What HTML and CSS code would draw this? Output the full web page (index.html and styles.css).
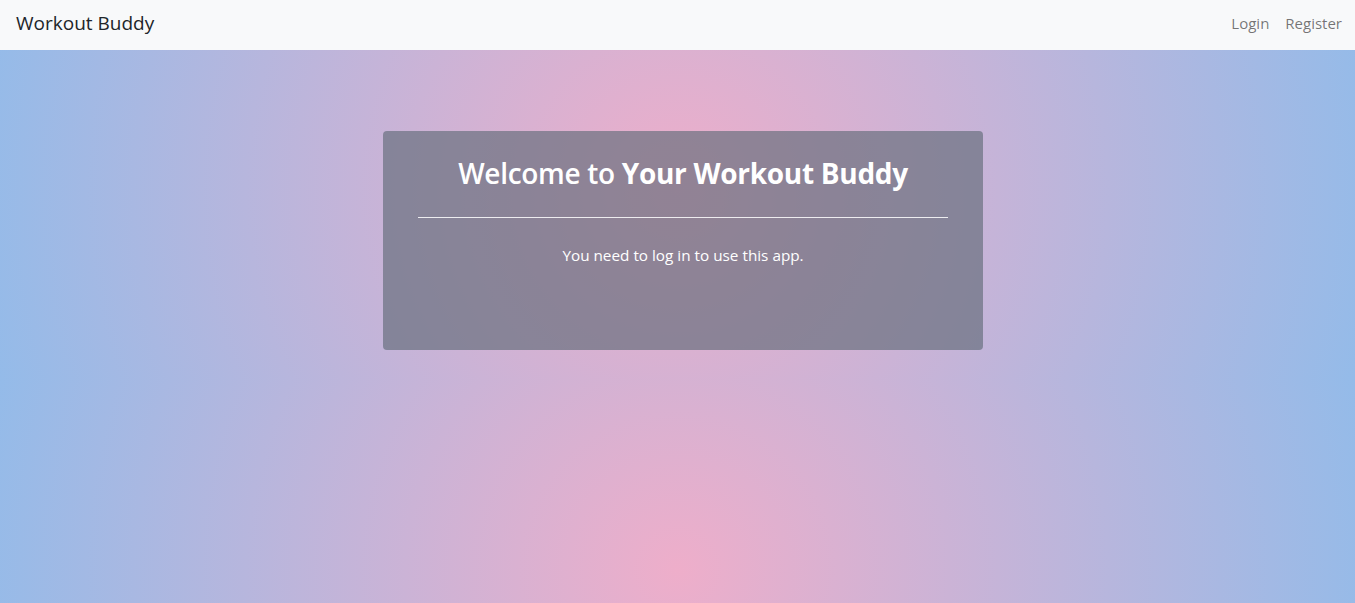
FILE: index.html
```html
<!DOCTYPE html>
<html lang="en">
<head>
<meta charset="utf-8">
<title>Workout Buddy</title>
<link rel="stylesheet" href="styles.css">
</head>
<body>
<nav class="navbar">
  <a class="brand" href="#">Workout Buddy</a>
  <div class="nav-links">
    <a class="nav-link" href="#">Login</a>
    <a class="nav-link" href="#">Register</a>
  </div>
</nav>
<main class="main">
  <section class="card">
    <h1 class="title">Welcome to <strong>Your Workout Buddy</strong></h1>
    <hr class="divider">
    <p class="lead">You need to log in to use this app.</p>
  </section>
</main>
</body>
</html>
```
FILE: styles.css
```css
html {
  background: radial-gradient(circle, #eeaeca 0%, #94bbe9 100%);
  background-size: 100% 380px;
  background-repeat: repeat-y;
  min-height: 100%;
}
body {
  margin: 0;
  font-family: "Open Sans", "Noto Sans", sans-serif;
  color: #212529;
}
.navbar {
  height: 50px;
  background: #f8f9fa;
  display: flex;
  align-items: center;
  justify-content: space-between;
  padding: 0 13px 4px 16px;
  box-sizing: border-box;
}
.brand {
  font-size: 19px;
  color: #212529;
  text-decoration: none;
}
.nav-links {
  display: flex;
  gap: 16px;
}
.nav-link {
  font-size: 15px;
  color: rgba(0,0,0,0.55);
  text-decoration: none;
}
.main {
  display: flex;
  justify-content: center;
  padding: 81px 0 0 11px;
}
.card {
  width: 600px;
  height: 219px;
  box-sizing: border-box;
  padding: 26px 35px;
  background: rgba(100,109,122,0.67);
  border-radius: 4px;
  color: #fff;
  text-align: center;
}
.title {
  margin: 0;
  font-size: 28px;
  font-weight: 600;
  line-height: 1.2;
  letter-spacing: -0.3px;
}
.title strong {
  font-weight: 700;
}
.divider {
  margin: 26px 0 0;
  border: 0;
  border-top: 1px solid rgba(255,255,255,0.85);
}
.lead {
  margin: 27px 0 0;
  font-size: 15.3px;
}
```
